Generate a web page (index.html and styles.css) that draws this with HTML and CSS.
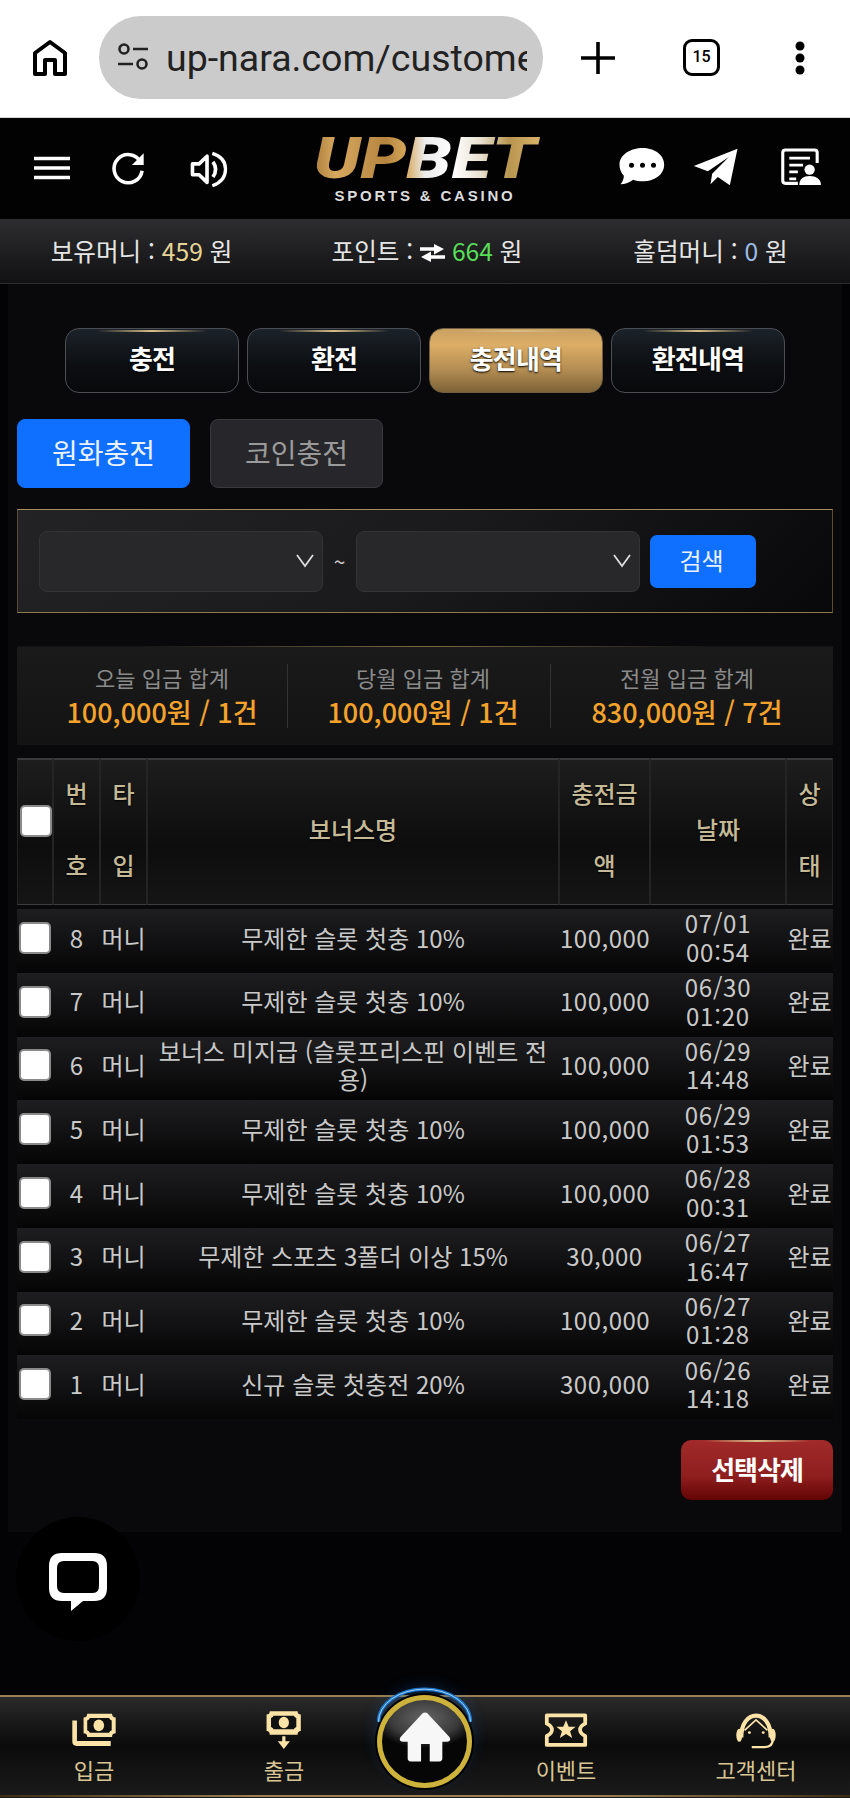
FILE: index.html
```html
<!DOCTYPE html>
<html lang="ko">
<head>
<meta charset="utf-8">
<title>UPBET</title>
<link rel="stylesheet" href="styles.css">
</head>
<body>
<div class="browser">
  <svg class="b-home" viewBox="0 0 36 38"><path d="M3 35V14L18 3l15 11v21H23V21H13v14z" fill="none" stroke="#000" stroke-width="4" stroke-linejoin="round"/></svg>
  <div class="pill">
    <svg class="tune" viewBox="0 0 32 30"><circle cx="7" cy="6" r="4.5" fill="none" stroke="#222" stroke-width="2.6"/><path d="M16 6h15M1 21h15" stroke="#222" stroke-width="2.6"/><circle cx="25" cy="21" r="4.5" fill="none" stroke="#222" stroke-width="2.6"/></svg>
    <div class="url">up-nara.com/customer/charge</div>
  </div>
  <svg class="b-plus" viewBox="0 0 34 32"><path d="M0 16h34M17 0v32" stroke="#000" stroke-width="3.6"/></svg>
  <div class="b-tabs">15</div>
  <svg class="b-dots" viewBox="0 0 10 34"><circle cx="5" cy="5" r="4.5"/><circle cx="5" cy="17" r="4.5"/><circle cx="5" cy="29" r="4.5"/></svg>
</div>

<header class="top">
  <div class="top-left">
    <svg class="i-menu" viewBox="0 0 36 24"><path d="M0 2.5h36M0 12h36M0 21.5h36" stroke="#fff" stroke-width="3.6"/></svg>
    <svg class="i-reload" viewBox="325 65 110 110"><path d="M418 98A43 43 0 1 0 423 125" fill="none" stroke="#fff" stroke-width="11"/><path d="M428 72v36h-36z" fill="#fff"/></svg>
    <svg class="i-sound" viewBox="570 60 120 115"><path d="M580 102h20l24-23v79l-24-23h-20z" fill="none" stroke="#fff" stroke-width="11" stroke-linejoin="round"/><path d="M642 96q16 22 0 46" fill="none" stroke="#fff" stroke-width="11"/><path d="M640 70q40 12 40 48t-40 50" fill="none" stroke="#fff" stroke-width="10"/></svg>
  </div>
  <div class="logo">
    <div class="logo-main">UPBET</div>
    <div class="logo-sub">SPORTS &amp; CASINO</div>
  </div>
  <div class="top-right">
    <svg class="i-chat" viewBox="55 50 140 120"><path d="M125 53c35 0 65 20 65 50s-30 50-65 50c-10 0-19-1-28-5-10 7-24 14-38 14 6-8 10-16 10-26-8-9-13-20-13-33 0-30 34-50 69-50z" fill="#fff"/><circle cx="92" cy="105" r="7.5" fill="#000"/><circle cx="125" cy="105" r="7.5" fill="#000"/><circle cx="158" cy="105" r="7.5" fill="#000"/></svg>
    <svg class="i-send" viewBox="275 55 140 120"><path d="M411 60L280 112l42 16 63-43-50 50-5 32 22-22 36 25z" fill="#fff"/></svg>
    <svg class="i-doc" viewBox="538 50 122 115"><path d="M590 155h-36q-8 0-8-8V66q0-8 8-8h84q8 0 8 8v30" fill="none" stroke="#fff" stroke-width="9"/><path d="M565 82h60M565 102h40M565 122h25M565 142h20" stroke="#fff" stroke-width="8"/><circle cx="624" cy="115" r="15" fill="#fff"/><path d="M594 160c0-18 12-26 30-26s33 8 33 26z" fill="#fff"/></svg>
  </div>
</header>

<div class="balance">
  <div>보유머니 : <span class="c-gold">459</span> 원</div>
  <div>포인트 : <svg class="i-swap" viewBox="0 0 25 18"><path d="M0 5h17M25 13H8" stroke="#fff" stroke-width="3.6"/><path d="M14 0l10 5-10 5.5zM11 7.5L1 13l10 5z" fill="#fff"/></svg> <span class="c-green">664</span> 원</div>
  <div>홀덤머니 : <span class="c-blue">0</span> 원</div>
</div>

<main class="wrap">
  <nav class="tabs">
    <a class="tab">충전</a>
    <a class="tab">환전</a>
    <a class="tab tab-on">충전내역</a>
    <a class="tab">환전내역</a>
  </nav>
  <div class="subtabs">
    <a class="sub sub-on">원화충전</a>
    <a class="sub">코인충전</a>
  </div>
  <form class="search">
    <div class="select"><svg class="chev" viewBox="0 0 18 14"><path d="M1 1l8 11 8-11" fill="none" stroke="#ddd" stroke-width="1.8"/></svg></div>
    <span class="tilde">~</span>
    <div class="select"><svg class="chev" viewBox="0 0 18 14"><path d="M1 1l8 11 8-11" fill="none" stroke="#ddd" stroke-width="1.8"/></svg></div>
    <a class="search-btn">검색</a>
  </form>
  <section class="summary">
    <div class="sum"><div class="sum-l">오늘 입금 합계</div><div class="sum-v">100,000원 / 1건</div></div>
    <div class="sum"><div class="sum-l">당월 입금 합계</div><div class="sum-v">100,000원 / 1건</div></div>
    <div class="sum"><div class="sum-l">전월 입금 합계</div><div class="sum-v">830,000원 / 7건</div></div>
  </section>
  <table class="list">
    <colgroup><col class="c1"><col class="c2"><col class="c3"><col class="c4"><col class="c5"><col class="c6"><col class="c7"></colgroup>
    <thead>
      <tr><th><input type="checkbox" class="chk"></th><th><div class="th-in">번호</div></th><th><div class="th-in">타입</div></th><th><div class="th-in">보너스명</div></th><th><div class="th-in">충전금액</div></th><th><div class="th-in">날짜</div></th><th><div class="th-in">상태</div></th></tr>
    </thead>
    <tbody>
      <tr><td><input type="checkbox" class="chk"></td><td>8</td><td>머니</td><td>무제한 슬롯 첫충 10%</td><td>100,000</td><td>07/01<br>00:54</td><td>완료</td></tr>
      <tr><td><input type="checkbox" class="chk"></td><td>7</td><td>머니</td><td>무제한 슬롯 첫충 10%</td><td>100,000</td><td>06/30<br>01:20</td><td>완료</td></tr>
      <tr><td><input type="checkbox" class="chk"></td><td>6</td><td>머니</td><td>보너스 미지급 (슬롯프리스핀 이벤트 전용)</td><td>100,000</td><td>06/29<br>14:48</td><td>완료</td></tr>
      <tr><td><input type="checkbox" class="chk"></td><td>5</td><td>머니</td><td>무제한 슬롯 첫충 10%</td><td>100,000</td><td>06/29<br>01:53</td><td>완료</td></tr>
      <tr><td><input type="checkbox" class="chk"></td><td>4</td><td>머니</td><td>무제한 슬롯 첫충 10%</td><td>100,000</td><td>06/28<br>00:31</td><td>완료</td></tr>
      <tr><td><input type="checkbox" class="chk"></td><td>3</td><td>머니</td><td>무제한 스포츠 3폴더 이상 15%</td><td>30,000</td><td>06/27<br>16:47</td><td>완료</td></tr>
      <tr><td><input type="checkbox" class="chk"></td><td>2</td><td>머니</td><td>무제한 슬롯 첫충 10%</td><td>100,000</td><td>06/27<br>01:28</td><td>완료</td></tr>
      <tr><td><input type="checkbox" class="chk"></td><td>1</td><td>머니</td><td>신규 슬롯 첫충전 20%</td><td>300,000</td><td>06/26<br>14:18</td><td>완료</td></tr>
    </tbody>
  </table>
  <div class="actions"><a class="del">선택삭제</a></div>
</main>

<div class="livechat">
  <svg viewBox="0 0 58 58"><path fill-rule="evenodd" d="M13 0h32q13 0 13 13v22q0 13-13 13H34L22 58V48h-9Q0 48 0 35V13Q0 0 13 0zM15 8q-7 0-7 7v18q0 7 7 7h29q6 0 6-7V15q0-7-7-7z" fill="#fff"/></svg>
</div>

<footer class="bottom">
  <a class="nav">
    <svg class="n-icon" viewBox="90 95 145 108"><path d="M97 120h14v62h102v15H110q-13 0-13-13z" fill="#fbe3a8"/><path d="M142 100h75q0 11 11 11v48q-11 0-11 11h-75q0-11-11-11v-48q11 0 11-11z" fill="#fbe3a8"/><path d="M150 113h58q2 5 8 7v30q-6 2-8 7h-58q-2-5-8-7v-30q6-2 8-7z" fill="#111"/><ellipse cx="177" cy="135" rx="16" ry="18" fill="#fbe3a8"/></svg>
    <span>입금</span>
  </a>
  <a class="nav">
    <svg class="n-icon n-tall" viewBox="670 88 125 125"><path d="M688 92h87q0 10 10 10v52q-10 0-10 11h-87q0-11-10-11v-52q10 0 10-10z" fill="#fbe3a8"/><path d="M700 106h63q2 5 8 7v28q-6 2-8 7h-63q-2-5-8-7v-28q6-2 8-7z" fill="#111"/><ellipse cx="732" cy="127" rx="16" ry="18" fill="#fbe3a8"/><path d="M727 170h10v16h14l-19 24-19-24h14z" fill="#fbe3a8"/></svg>
    <span>출금</span>
  </a>
  <div class="nav-gap"></div>
  <a class="nav">
    <svg class="n-icon" viewBox="550 98 138 105"><path d="M563 108h112v24q-15 7-15 18t15 18v26H563v-26q15-7 15-18t-15-18z" fill="none" stroke="#fbe3a8" stroke-width="11" stroke-linejoin="round"/><path d="M619 122l8 19h20l-16 13 6 20-18-12-18 12 6-20-16-13h20z" fill="#fbe3a8"/></svg>
    <span>이벤트</span>
  </a>
  <a class="nav">
    <svg class="n-icon n-tall" viewBox="1112 88 146 122"><path d="M1140 172c0-42 20-67 45-67s45 25 45 67" fill="none" stroke="#fbe3a8" stroke-width="13"/><ellipse cx="1134" cy="165" rx="9" ry="20" fill="#fbe3a8"/><ellipse cx="1236" cy="165" rx="9" ry="20" fill="#fbe3a8"/><path d="M1150 150l35-32 35 32" fill="none" stroke="#fbe3a8" stroke-width="5"/><circle cx="1165" cy="157" r="4.5" fill="#fbe3a8"/><circle cx="1207" cy="157" r="4.5" fill="#fbe3a8"/><path d="M1172 201h40q24 0 24-22" fill="none" stroke="#fbe3a8" stroke-width="7"/></svg>
    <span>고객센터</span>
  </a>
  <a class="home">
    <svg class="home-arc" viewBox="0 0 96 36"><path d="M1.5 35A46.5 33 0 0 1 94.5 35" fill="none" stroke="#1c76c8" stroke-width="3.5"/><path d="M1.5 35A46.5 33 0 0 1 94.5 35" fill="none" stroke="#9fd0ff" stroke-width="1"/></svg>
    <svg class="home-ico" viewBox="0 0 66 66"><path d="M33 2c2 0 3 1 5 3l26 28c2 3 1 6-3 6h-6v21q0 4-4 4H39V42H28v22H15q-4 0-4-4V39H5c-4 0-5-3-3-6L28 5c2-2 3-3 5-3z" fill="#f7f7f7"/></svg>
  </a>
</footer>
</body>
</html>
```
FILE: styles.css
```css
* { box-sizing: border-box; }
html, body { margin: 0; padding: 0; }
body {
  width: 850px;
  height: 1798px;
  overflow: hidden;
  position: relative;
  display: flex;
  flex-direction: column;
  background: #030305;
  color: #ddd;
  font-family: "Noto Sans CJK KR", "Noto Sans", sans-serif;
}
a { display: block; }
svg { display: block; flex: none; }

/* browser chrome */
.browser {
  height: 118px;
  flex: none;
  background: #fff;
  border-bottom: 1px solid #d8d8d8;
  display: flex;
  align-items: center;
  padding: 0 0 2px 32px;
}
.b-home { width: 36px; height: 38px; }
.pill {
  width: 444px;
  height: 83px;
  margin-left: 31px;
  border-radius: 42px;
  background: #cbcbcb;
  display: flex;
  align-items: center;
  padding: 0 16px 0 18px;
  overflow: hidden;
}
.tune { width: 32px; height: 30px; margin-right: 17px; }
.url {
  flex: 1;
  min-width: 0;
  overflow: hidden;
  white-space: nowrap;
  font: 400 37.5px Roboto, sans-serif;
  color: #222;
}
.b-plus { width: 34px; height: 32px; margin-left: 38px; }
.b-tabs {
  width: 37px;
  height: 37px;
  margin-left: 68px;
  border: 3.5px solid #000;
  border-radius: 9px;
  font: 500 16px/30px Roboto, sans-serif;
  color: #000;
  text-align: center;
}
.b-dots { width: 10px; height: 34px; margin-left: 75px; fill: #000; }

/* header */
.top {
  height: 101px;
  flex: none;
  background: #020203;
  display: flex;
  align-items: flex-start;
  justify-content: space-between;
}
.top-left { width: 300px; display: flex; padding: 32px 0 0 34px; }
.i-menu { width: 36px; height: 24px; margin-top: 6px; }
.i-reload { width: 36px; height: 36px; margin: 1px 0 0 40px; }
.i-sound { width: 40px; height: 38px; margin-left: 43px; }
.logo { width: 224px; margin-top: 13px; text-align: center; }
.logo-main {
  font: italic 900 58px/54px Roboto, "Liberation Sans", sans-serif;
  transform: scaleX(1.25);
  background: linear-gradient(90deg, #8c6227 5%, #d7a85e 18%, #b58540 36%, #d5a558 43%, #ececec 50%, #fff 60%, #e8e0d0 70%, #b89550 80%, #e5bd73 95%);
  -webkit-background-clip: text;
  background-clip: text;
  color: transparent;
}
.logo-sub {
  font: 700 15px/18px "Liberation Sans", sans-serif;
  letter-spacing: 2.8px;
  color: #dcdcdc;
  margin-top: 2px;
  white-space: nowrap;
}
.top-right { width: 300px; display: flex; justify-content: flex-end; padding: 29px 28px 0 0; }
.i-chat { width: 47px; height: 40px; }
.i-send { width: 47px; height: 40px; margin-left: 26px; }
.i-doc { width: 42px; height: 40px; margin-left: 41px; }

/* balance bar */
.balance {
  height: 65px;
  flex: none;
  background: linear-gradient(180deg, #2d2d2f, #111113);
  border-bottom: 1px solid #2c2c2c;
  display: grid;
  grid-template-columns: 283px 288px 279px;
  align-items: center;
  text-align: center;
  font-size: 24.6px;
  color: #e6e6e6;
  padding-bottom: 3px;
}
.i-swap { display: inline-block; width: 25px; height: 18px; vertical-align: -1px; }
.c-gold { color: #e6d596; }
.c-green { color: #58de58; }
.c-blue { color: #9bbde6; }

/* main panel */
.wrap {
  flex: none;
  margin: 0 8px;
  padding: 44px 9px 32px;
  background: #09090c;
}
.tabs { display: flex; justify-content: center; gap: 8px; }
.tab {
  position: relative;
  width: 174px;
  height: 65px;
  border: 1px solid #4b4e53;
  border-radius: 14px;
  background: linear-gradient(180deg, #1b2229 0%, #0c0e11 60%, #08090b 100%);
  color: #fff;
  font-size: 26px;
  font-weight: 700;
  letter-spacing: -.8px;
  line-height: 58px;
  text-align: center;
  text-shadow: 0 1px 2px #000;
}
.tab::before {
  content: "";
  position: absolute;
  left: 18%;
  right: 18%;
  top: 1px;
  height: 2px;
  background: linear-gradient(90deg, transparent, #d8bd87, transparent);
}
.tab-on {
  border-color: #6e5e42;
  background: linear-gradient(180deg, #c9a163 0%, #dcae66 25%, #b38c52 65%, #7d6338 100%);
}
.subtabs { display: flex; gap: 20px; margin-top: 26px; }
.sub {
  width: 173px;
  height: 69px;
  border: 1px solid #3a3a3e;
  border-radius: 8px;
  background: #27272b;
  color: #9a9a9a;
  font-size: 28px;
  line-height: 65px;
  text-align: center;
}
.sub-on { border-color: #0f6fff; background: #0f6fff; color: #eaf2ff; }
.search {
  height: 104px;
  margin-top: 21px;
  border: 1px solid #5d4c2c;
  border-top-color: #a88f58;
  border-bottom-color: #8e7a50;
  background: linear-gradient(135deg, #232325 0%, #1a1a1c 50%, #08080a 100%);
  display: flex;
  align-items: center;
  padding: 0 0 0 21px;
}
.select {
  width: 284px;
  height: 61px;
  border: 1px solid #333336;
  border-radius: 8px;
  background: #28282b;
  display: flex;
  align-items: center;
  justify-content: flex-end;
  padding-right: 8px;
}
.chev { width: 18px; height: 14px; }
.tilde { width: 33px; text-align: center; font-size: 21px; color: #ccc; }
.search-btn {
  width: 106px;
  height: 53px;
  margin-left: 10px;
  border-radius: 7px;
  background: #0f6fff;
  color: #eaf2ff;
  font-size: 24px;
  line-height: 50px;
  text-align: center;
  text-indent: -3px;
}
.summary {
  height: 99px;
  margin-top: 33px;
  border-top: 1px solid;
  border-image: linear-gradient(90deg, transparent 15%, #7c6a42 50%, transparent 85%) 1;
  background: linear-gradient(180deg, #1a1a1b, #131314);
  display: grid;
  grid-template-columns: 271px 263px 1fr;
  align-items: center;
  text-align: center;
}
.sum { height: 64px; border-right: 1px solid #333; padding-left: 8px; }
.sum:first-child { padding-left: 20px; }
.sum:last-child { border-right: 0; padding-right: 18px; }
.sum-l { font-size: 22px; line-height: 29px; color: #8b8b8b; margin-top: -1px; }
.sum-v { font-size: 27px; font-weight: 500; line-height: 37px; margin-top: 1px; color: #f3a32c; }

/* table */
.list {
  width: 816px;
  margin-top: 13px;
  table-layout: fixed;
  border-collapse: separate;
  border-spacing: 0;
}
.c1 { width: 36px; }
.c2, .c3, .c7 { width: 47px; }
.c4 { width: 412px; }
.c5 { width: 91px; }
.c6 { width: 136px; }
.list thead::after { content: ""; display: block; height: 4px; }
.list th {
  height: 147px;
  padding: 0 2px;
  border-top: 2px solid #3a3a3a;
  border-bottom: 1px solid #3c3c3c;
  border-left: 1px solid #242424;
  border-right: 1px solid #242424;
  background: linear-gradient(180deg, #1d1d1e, #0d0d0e 60%, #151516);
  color: #c6ba96;
  font-size: 24px;
  font-weight: 500;
  line-height: 72px;
  text-align: center;
  text-shadow: 0 1px 2px #000;
}
.th-in { margin: -3px 0 3px; }
.list th:first-child, .list td:first-child { padding-left: 2px; padding-right: 2px; text-align: left; }
.list th .chk { margin-bottom: 23px; }
.list td {
  height: 63.75px;
  padding: 0 1px 6px;
  background: linear-gradient(180deg, #1e1e20, #050506);
  color: #c9c9c9;
  font-size: 24px;
  font-weight: 400;
  line-height: 28.5px;
  text-align: center;
}
.list td:nth-child(5) { letter-spacing: .5px; }
.list td:nth-child(6) { letter-spacing: .8px; }
.chk {
  appearance: none;
  -webkit-appearance: none;
  display: block;
  width: 32px;
  height: 32px;
  margin: 0;
  border: 2px solid #8a8a8a;
  border-radius: 5px;
  background: #fff;
}
.actions { display: flex; justify-content: flex-end; margin-top: 21px; }
.del {
  position: relative;
  width: 152px;
  height: 60px;
  border-radius: 10px;
  background: linear-gradient(180deg, #a12a2a 0%, #8f1e1e 60%, #620404 100%);
  color: #fff;
  font-size: 26px;
  font-weight: 700;
  letter-spacing: -1px;
  line-height: 58px;
  text-align: center;
}
.del::before {
  content: "";
  position: absolute;
  left: 15%;
  right: 15%;
  top: 0;
  height: 2px;
  background: linear-gradient(90deg, transparent, #d8bd87, transparent);
}

/* live chat bubble */
.livechat {
  position: absolute;
  left: 16px;
  top: 1517px;
  width: 124px;
  height: 124px;
  border-radius: 50%;
  background: #000;
  display: flex;
  align-items: center;
  justify-content: center;
}
.livechat svg { width: 58px; height: 58px; margin-top: 6px; }

/* bottom nav */
.bottom {
  position: relative;
  height: 103px;
  flex: none;
  margin-top: auto;
  border-top: 2px solid #9b7f52;
  background: linear-gradient(180deg, #2a2a2b 0%, #19191a 25%, #0b0b0c 48%, #1b1b1c 100%);
  display: grid;
  grid-template-columns: 188px 192px 90px 192px 188px;
}
.bottom::after {
  content: "";
  position: absolute;
  left: 0;
  right: 0;
  bottom: 1px;
  height: 2px;
  background: linear-gradient(90deg, #3a2d15, #9b7f52 30%, #9b7f52 70%, #3a2d15);
}
.nav {
  display: flex;
  flex-direction: column;
  align-items: center;
  color: #d8c593;
  font-size: 22px;
  line-height: 28px;
}
.n-icon { width: 48px; height: 36px; margin: 15px 0 7px; }
.n-tall { height: 40px; margin: 13px 0 5px; }
.home {
  position: absolute;
  left: 377px;
  top: -2px;
  width: 95px;
  height: 93px;
  border: 5px solid #cdb23c;
  border-radius: 50%;
  background: radial-gradient(ellipse 62% 36% at 50% 22%, #666 0%, #3a3a3a 65%, transparent 100%), #060606;
  display: flex;
  align-items: center;
  justify-content: center;
  box-shadow: 0 0 0 2px #000, 0 -8px 16px rgba(30, 110, 200, .3);
}
.home-ico { width: 52px; height: 52px; margin-top: -10px; }
.home-arc { position: absolute; left: -5px; top: -13px; width: 95px; height: 36px; }
```
